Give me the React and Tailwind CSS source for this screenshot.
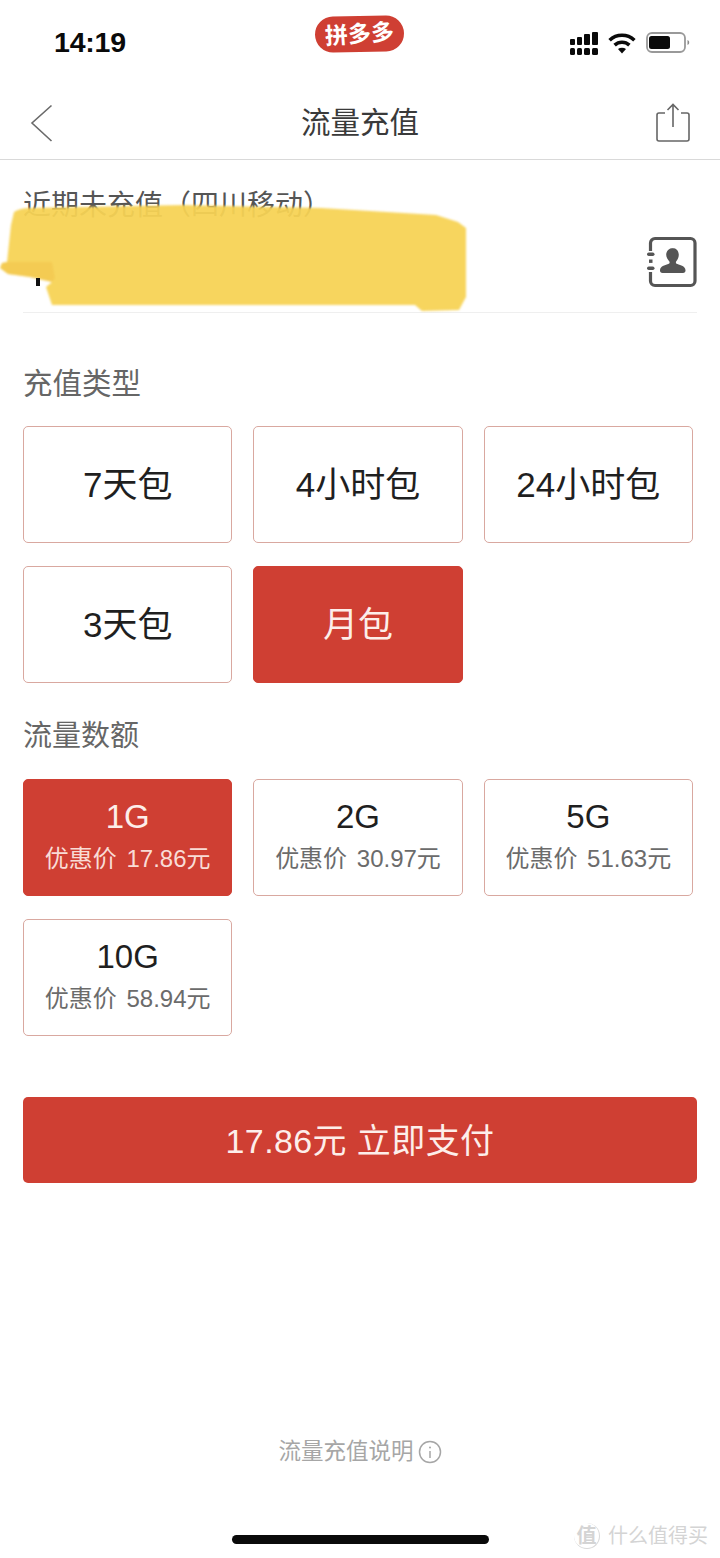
const FONT = "font-['Liberation_Sans','Noto_Sans_CJK_SC',sans-serif]";

function Signal() {
  const cols = [
    { x: 1, w: 5, y: 7 },
    { x: 8, w: 5, y: 5 },
    { x: 15, w: 6, y: 2 },
    { x: 23, w: 6, y: 0 },
  ];
  return (
    <svg width="30" height="23" viewBox="0 0 30 23" className="block">
      {cols.map((c, i) => (
        <g key={i} fill="#0a0a0a">
          <rect x={c.x} y={c.y} width={c.w} height={13 - c.y} rx="1" />
          <rect x={c.x} y="16" width={c.w} height="7" rx="1.5" />
        </g>
      ))}
    </svg>
  );
}

function Wifi() {
  return (
    <svg width="28" height="21" viewBox="0 0 28 21" className="block" fill="none" stroke="#0a0a0a" strokeWidth="3.6">
      <path d="M1.6 7.2C8.6 .6 19.4 .6 26.4 7.2" />
      <path d="M6.6 12.2c4.3-3.9 10.5-3.9 14.8 0" />
      <path d="M14 20.5l-4-4.4c2.3-1.7 5.7-1.7 8 0z" fill="#0a0a0a" stroke="none" />
    </svg>
  );
}

function Battery() {
  return (
    <svg width="45" height="21" viewBox="0 0 45 21" className="block">
      <rect x="2" y="1" width="38" height="19" rx="5" fill="none" stroke="#999" strokeWidth="1.8" />
      <rect x="4" y="4" width="21" height="13" rx="2.5" fill="#0a0a0a" />
      <path d="M42.5 8c1.200.5 1.700 1.400 1.700 2.500s-.5 2-1.700 2.500z" fill="#8a8a8a" />
    </svg>
  );
}

function Contact() {
  return (
    <svg width="50" height="52" viewBox="0 0 50 52" className="block">
      <path d="M3.500 15V7a4.500 4.500 0 0 1 4.500-4.500h35.500A4.500 4.500 0 0 1 48 7v38a4.500 4.500 0 0 1-4.500 4.500H8A4.500 4.500 0 0 1 3.500 45v-9" fill="none" stroke="#555" strokeWidth="3.200" />
      <rect x="0" y="16.500" width="7.500" height="3.400" rx="1.700" fill="#555" />
      <rect x="2" y="23.500" width="3.500" height="3.400" fill="#555" />
      <rect x="0" y="30.500" width="7.500" height="3.400" rx="1.700" fill="#555" />
      <path d="M25.500 12c3.900 0 6.300 3 6.300 6.800 0 3-1.300 5-2.500 6.500-.8 1.200-.4 2.200 1 2.800 3.500 1.300 8 2.100 8.200 6.100.1 1.500-.8 2.800-2.500 2.800H15.500c-1.700 0-2.600-1.300-2.500-2.800.2-4 4.700-4.800 8.200-6.100 1.400-.6 1.800-1.600 1-2.800-1.200-1.500-3-3.500-3-6.500 0-3.800 2.900-6.800 6.800-6.800z" fill="#555" />
    </svg>
  );
}

function Option({ active, title, sub }) {
  return (
    <div className={`flex h-[117px] flex-col items-center justify-center rounded-[5px] border ${sub ? "pb-[6px]" : ""} ${active ? "border-[#cf3f33] bg-[#cf3f33] text-[#fdeeea]" : "border-[#d9a8a0] bg-white text-[#1f1f1f]"}`}>
      <div className={sub ? "text-[33px] leading-[40px]" : "text-[35px] leading-[44px]"}>{title}</div>
      {sub && (
        <div className={`mt-[6px] mb-[-3px] text-[24px] leading-[32px] [word-spacing:3px] ${active ? "text-[#f9dcd6]" : "text-[#6b6b6b]"}`}>{sub}</div>
      )}
    </div>
  );
}

export default function App() {
  return (
    <div className={`relative flex h-[1558px] w-[720px] flex-col overflow-hidden bg-white ${FONT}`}>
      {/* status bar */}
      <div className="relative flex h-[80px] items-start justify-between pl-[54px] pr-[30px] pt-[32px]">
        <div className="mt-[-1px] text-[28.500px] font-bold leading-[22px] tracking-[-0.2px] text-[#0a0a0a]">14:19</div>
        <div className="flex items-start gap-[9px]">
          <Signal />
          <div className="pt-[1px]"><Wifi /></div>
          <Battery />
        </div>
        <div className="absolute left-[315px] top-[16px] flex h-[36px] w-[89px] -rotate-[1deg] items-center justify-center rounded-full bg-[#cf3f33] text-white">
          <span className="inline-block -rotate-[3deg] text-[23px] font-bold leading-none">拼多多</span>
        </div>
      </div>

      {/* nav */}
      <div className="flex h-[80px] items-center justify-between border-b border-[#d9d9d9] pl-[30px] pr-[30px] pt-[6px]">
        <div className="w-[34px]">
          <svg width="24" height="38" viewBox="0 0 24 38" fill="none" stroke="#6a6a6a" strokeWidth="1.6" className="block">
            <path d="M21.500 1.500L2 19l19.500 18" />
          </svg>
        </div>
        <div className="text-[29.500px] leading-[40px] text-[#3a3a3a]">流量充值</div>
        <svg width="34" height="40" viewBox="0 0 34 40" fill="none" stroke="#666" strokeWidth="1.6" className="block">
          <path d="M9 10H3a2 2 0 0 0-2 2v24a2 2 0 0 0 2 2h28a2 2 0 0 0 2-2V12a2 2 0 0 0-2-2h-6" />
          <path d="M17 24V1.500M11.500 7L17 1.500 22.500 7" />
        </svg>
      </div>

      {/* phone */}
      <div className="relative mx-[23px] flex h-[153px] items-start justify-between border-b border-[#efefef] pt-[26px]">
        <div className="text-[28px] leading-[40px] text-[#555]">近期未充值（四川移动）</div>
        <div className="absolute left-[-23px] top-0">
          <svg width="500" height="153" viewBox="0 160 500 153" className="block blur-[1.2px]">
            <path d="M14 212Q20 208 30 208L184 205L321 208L436 215L458 222L466 228V297L459 310L422 311L415 305L52 305L46 287L52 282L30 277L8 274L0 268L2 263L7 262L11 225Z" fill="#f7d254" fillOpacity="0.94" />
            <path d="M0 268L2 263L7 262L52 262L55 278L52 282L30 277L8 274Z" fill="#f2c44c" fillOpacity="0.6" />
          </svg>
        </div>
        <div className="absolute left-[13px] top-[118px] h-[8px] w-[4px] bg-[#111]" />
        <div className="absolute right-0 top-[76px]"><Contact /></div>
      </div>

      {/* type */}
      <div className="px-[23px]">
        <div className="mt-[51px] text-[29.500px] leading-[40px] text-[#666]">充值类型</div>
        <div className="mt-[22px] grid w-[670px] grid-cols-3 gap-x-[21px] gap-y-[23px]">
          <Option title="7天包" />
          <Option title="4小时包" />
          <Option title="24小时包" />
          <Option title="3天包" />
          <Option title="月包" active />
        </div>

        <div className="mt-[33px] text-[29px] leading-[40px] text-[#666]">流量数额</div>
        <div className="mt-[23px] grid w-[670px] grid-cols-3 gap-x-[21px] gap-y-[23px]">
          <Option title="1G" sub="优惠价 17.86元" active />
          <Option title="2G" sub="优惠价 30.97元" />
          <Option title="5G" sub="优惠价 51.63元" />
          <Option title="10G" sub="优惠价 58.94元" />
        </div>

        <div className="mt-[61px] flex h-[86px] w-[674px] items-center justify-center rounded-[5px] bg-[#cf3f33] pt-[2px] text-[34px] tracking-[0.4px] text-[#fdeeea]">
          17.86元 立即支付
        </div>
      </div>

      {/* footer */}
      <div className="mt-[253px] flex items-center justify-center gap-[4px] text-[22.500px] leading-[32px] text-[#a6a6a6]">
        <span>流量充值说明</span>
        <svg width="24" height="24" viewBox="0 0 24 24" fill="none" stroke="#a6a6a6" strokeWidth="1.500" className="block">
          <circle cx="12" cy="12" r="10.500" />
          <path d="M12 11v7" />
          <circle cx="12" cy="7.500" r="1" fill="#a6a6a6" stroke="none" />
        </svg>
      </div>

      <div className="absolute left-[232px] top-[1535px] h-[9px] w-[257px] rounded-full bg-[#0a0a0a]" />
      <div className="absolute left-[574px] top-[1522px] flex items-center gap-[8px] text-[#d4d4d4]">
        <div className="flex h-[26px] w-[26px] items-center justify-center rounded-full border-r border-b border-[#d9d9d9] text-[20px] font-bold leading-none">值</div>
        <div className="text-[20px] leading-[28px]">什么值得买</div>
      </div>
    </div>
  );
}
